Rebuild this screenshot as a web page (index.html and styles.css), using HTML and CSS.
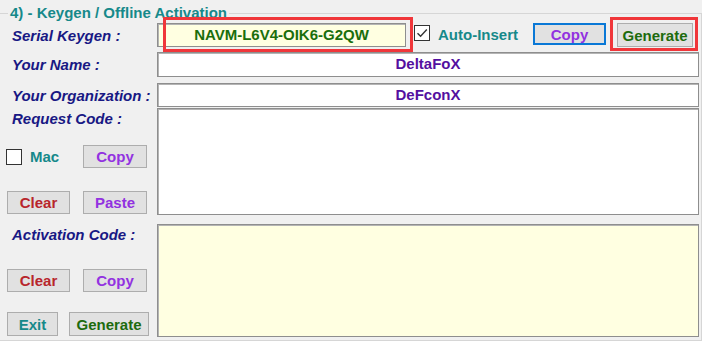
FILE: index.html
```html
<!DOCTYPE html>
<html lang="en">

<head>
    <meta charset="UTF-8">
    <title>Keygen / Offline Activation</title>
    <link rel="stylesheet" href="styles.css">
</head>

<body>

    <fieldset class="group">
        <legend class="group-title">4) - Keygen / Offline Activation</legend>

        <div class="row row-serial">
            <div class="side side-center">
                <span class="label">Serial Keygen :</span>
            </div>
            <div class="serial-line">
                <div class="mark-wrap">
                    <div class="box box-serial">NAVM-L6V4-OIK6-G2QW</div>
                    <span class="mark mark-serial"></span>
                </div>
                <span class="check check-auto">
                    <svg width="14" height="14" viewBox="0 0 14 14">
                        <path d="M2.5 7.2 L5.6 10.3 L11.8 3.6" fill="none" stroke="#333" stroke-width="1.4" />
                    </svg>
                </span>
                <span class="opt-text">Auto-Insert</span>
                <button class="btn btn-focus purple btn-copy-top">Copy</button>
                <div class="mark-wrap gen-wrap">
                    <button class="btn green btn-gen-top">Generate</button>
                    <span class="mark mark-gen"></span>
                </div>
            </div>
        </div>

        <div class="row row-name">
            <div class="side side-center">
                <span class="label">Your Name :</span>
            </div>
            <div class="box box-wide value">DeltaFoX</div>
        </div>

        <div class="row row-org">
            <div class="side side-center">
                <span class="label">Your Organization :</span>
            </div>
            <div class="box box-wide value">DeFconX</div>
        </div>

        <div class="row row-request">
            <div class="side">
                <span class="label label-top">Request Code :</span>
                <div class="side-line line-mac">
                    <span class="check check-mac"></span>
                    <span class="opt-text mac-text">Mac</span>
                    <button class="btn purple btn-side">Copy</button>
                </div>
                <div class="side-line line-clear">
                    <button class="btn red btn-clear">Clear</button>
                    <button class="btn purple btn-side">Paste</button>
                </div>
            </div>
            <div class="box box-wide box-request"></div>
        </div>

        <div class="row row-activation">
            <div class="side">
                <span class="label label-top">Activation Code :</span>
                <div class="side-line line-act">
                    <button class="btn red btn-clear">Clear</button>
                    <button class="btn purple btn-side">Copy</button>
                </div>
                <div class="side-line line-exit">
                    <button class="btn teal btn-exit">Exit</button>
                    <button class="btn green btn-gen">Generate</button>
                </div>
            </div>
            <div class="box box-wide box-activation"></div>
        </div>
    </fieldset>

</body>

</html>
```

FILE: styles.css
```css
* {
    box-sizing: border-box;
}

body {
    margin: 0;
    background: #f0f0f0;
    font-family: 'Liberation Sans', Arial, sans-serif;
    font-size: 15px;
    font-weight: bold;
    overflow: hidden;
}

.group {
    margin: 5px 0 0 -1px;
    width: 703px;
    padding: 2px 0 3px 0;
    border: 1px solid #d6d6d6;
}

.group-title {
    margin-left: 8px;
    padding: 0 2px;
    line-height: 16px;
    color: #16898a;
}

.row {
    display: flex;
}

.row-serial {
    height: 24px;
}

.row-name {
    height: 25px;
    margin-top: 5px;
}

.row-org {
    height: 24px;
    margin-top: 6px;
}

.row-request {
    height: 107px;
    margin-top: 1px;
}

.row-activation {
    height: 113px;
    margin-top: 9px;
}

.side {
    width: 157px;
    flex-shrink: 0;
    display: flex;
    flex-direction: column;
}

.side-center {
    justify-content: center;
}

.label {
    padding-left: 12px;
    line-height: 17px;
    font-style: italic;
    color: #181884;
    white-space: nowrap;
}

.label-top {
    margin-top: 2px;
}

.side-line {
    display: flex;
    align-items: center;
}

.line-mac {
    margin-top: 18px;
    height: 23px;
}

.line-clear {
    margin-top: 23px;
}

.line-act {
    margin-top: 26px;
}

.line-exit {
    margin-top: 20px;
}

/* text boxes */

.box {
    background: #fff;
    border: 1px solid #8e8e8e;
    box-shadow: inset 1px 1px 0 #b4b4b4;
    text-align: center;
}

.box-wide {
    width: 542px;
}

.value {
    line-height: 22px;
    color: #5410a0;
}

.box-serial {
    width: 249px;
    height: 24px;
    line-height: 22px;
    background: #ffffe1;
    color: #1a6e0c;
}

.box-activation {
    background: #ffffe1;
}

.serial-line {
    display: flex;
    align-items: flex-start;
}

/* red annotation frames */

.mark-wrap {
    position: relative;
}

.mark {
    position: absolute;
    border: 3px solid #f0363a;
    pointer-events: none;
}

.mark-serial {
    left: 6px;
    top: -6px;
    width: 250px;
    height: 35px;
}

.mark-gen {
    left: -7px;
    top: -6px;
    width: 88px;
    height: 34px;
}

/* checkboxes */

.check {
    width: 16px;
    height: 16px;
    flex-shrink: 0;
    background: #fff;
    border: 1px solid #333;
    display: flex;
    align-items: center;
    justify-content: center;
}

.check-auto {
    margin: 2px 0 0 8px;
}

.check-mac {
    margin-left: 6px;
}

.opt-text {
    color: #16898a;
    white-space: nowrap;
}

.serial-line .opt-text {
    margin: 3px 0 0 8px;
    line-height: 17px;
    width: 95px;
}

.mac-text {
    margin-left: 8px;
    width: 40px;
}

/* buttons */

.btn {
    font-family: inherit;
    font-size: 15px;
    font-weight: bold;
    background: #e1e1e1;
    border: 1px solid #adadad;
    padding: 0;
    height: 23px;
    flex-shrink: 0;
    cursor: pointer;
}

.btn-focus {
    border: 2px solid #0a78d6;
}

.btn-copy-top {
    width: 73px;
    height: 22px;
}

.gen-wrap {
    margin-left: 11px;
}

.btn-gen-top {
    width: 76px;
    height: 24px;
}

.btn-side {
    width: 64px;
    margin-left: 13px;
}

.btn-clear {
    width: 63px;
    margin-left: 7px;
}

.btn-exit {
    width: 51px;
    height: 24px;
    margin-left: 7px;
}

.btn-gen {
    width: 80px;
    height: 24px;
    margin-left: 11px;
}

.purple {
    color: #9232e0;
}

.green {
    color: #1d6b0e;
}

.red {
    color: #b8262c;
}

.teal {
    color: #16898a;
}
```
